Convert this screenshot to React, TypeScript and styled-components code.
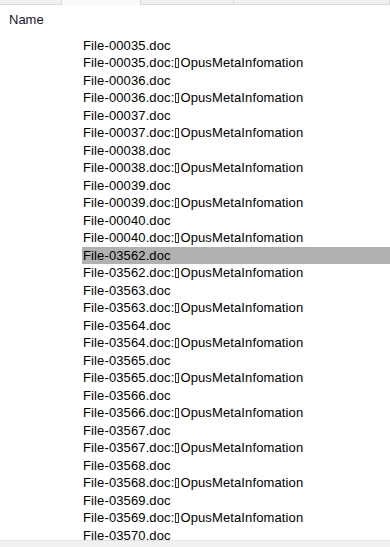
import styled, { createGlobalStyle } from 'styled-components'

const GlobalStyle = createGlobalStyle`
  html, body {
    margin: 0;
    padding: 0;
    background: #ffffff;
  }
  body {
    font-family: "Liberation Sans", Arial, sans-serif;
  }
`

interface TabProps {
  active?: boolean;
  width: number;
}

interface RowProps {
  selected?: boolean;
}

const Window = styled.div`
  width: 390px;
  height: 547px;
  display: flex;
  flex-direction: column;
  background: #ffffff;
  overflow: hidden;
`

const TabStrip = styled.div`
  height: 5px;
  display: flex;
  background: #f0f0f0;
  flex-shrink: 0;
`

const Tab = styled.div<TabProps>`
  width: ${props => props.width}px;
  flex-shrink: 0;
  box-sizing: border-box;
  background: ${props => props.active ? '#fafafa' : '#f0f0f0'};
  border-right: 1px solid #d9d9d9;
  border-bottom: ${props => props.active ? 'none' : '1px solid #dadada'};
`

const Content = styled.div`
  flex: 1;
  overflow: hidden;
  display: flex;
  flex-direction: column;
`

const Header = styled.div`
  height: 31.5px;
  flex-shrink: 0;
  box-sizing: border-box;
  padding: 6px 0 0 9px;
  font-size: 13px;
  line-height: 17.5px;
  color: #14142a;
`

const List = styled.div`
  display: flex;
  flex-direction: column;
`

const Row = styled.div<RowProps>`
  height: 17.5px;
  flex-shrink: 0;
  line-height: 17.5px;
  margin-left: 82px;
  padding-left: 1px;
  font-size: 13px;
  letter-spacing: 0.12px;
  color: #000000;
  white-space: nowrap;
  background: ${props => props.selected ? '#b1b1b1' : 'transparent'};
`

const Tofu = styled.span`
  display: inline-block;
  box-sizing: border-box;
  width: 4px;
  height: 10px;
  margin: 0 1px 0 1px;
  border: 1px solid #333333;
  vertical-align: -1px;
`

const StatusStrip = styled.div`
  height: 6px;
  flex-shrink: 0;
  background: #f0f0f0;
  border-top: 1px solid #e3e3e3;
`

const ids = ['00035', '00036', '00037', '00038', '00039', '00040',
  '03562', '03563', '03564', '03565', '03566', '03567', '03568', '03569']

const rows: { name: string; stream: boolean }[] = []
ids.forEach(id => {
  rows.push({ name: `File-${id}.doc`, stream: false })
  rows.push({ name: `File-${id}.doc:`, stream: true })
})
rows.push({ name: 'File-03570.doc', stream: false })

export default function App() {
  return (
    <>
      <GlobalStyle />
      <Window>
        <TabStrip>
          <Tab width={62} />
          <Tab width={79} active />
          <Tab width={93} />
          <Tab width={156} />
        </TabStrip>
        <Content>
          <Header>Name</Header>
          <List>
            {rows.map((r, i) => (
              <Row key={i} selected={r.name === 'File-03562.doc'}>
                {r.name}
                {r.stream && <><Tofu />OpusMetaInfomation</>}
              </Row>
            ))}
          </List>
        </Content>
        <StatusStrip />
      </Window>
    </>
  )
}
